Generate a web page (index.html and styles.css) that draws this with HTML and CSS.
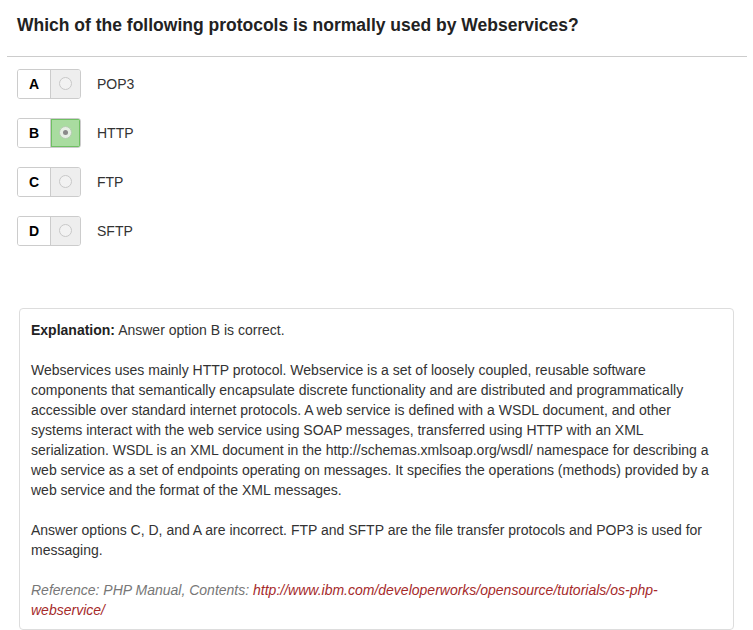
FILE: index.html
```html
<!DOCTYPE html>
<html>
<head>
<meta charset="utf-8">
<link rel="stylesheet" href="styles.css">
</head>
<body>
<div class="page">
  <h3 class="question">Which of the following protocols is normally used by Webservices?</h3>
  <hr class="rule">
  <div class="options">
    <div class="option">
      <div class="choice"><span class="letter">A</span><span class="radio-cell"><span class="radio"></span></span></div>
      <span class="label">POP3</span>
    </div>
    <div class="option">
      <div class="choice"><span class="letter">B</span><span class="radio-cell selected"><span class="radio checked"></span></span></div>
      <span class="label">HTTP</span>
    </div>
    <div class="option">
      <div class="choice"><span class="letter">C</span><span class="radio-cell"><span class="radio"></span></span></div>
      <span class="label">FTP</span>
    </div>
    <div class="option">
      <div class="choice"><span class="letter">D</span><span class="radio-cell"><span class="radio"></span></span></div>
      <span class="label">SFTP</span>
    </div>
  </div>
  <div class="explanation">
    <p><strong>Explanation:</strong> Answer option B is correct.</p>
    <p>Webservices uses mainly HTTP protocol. Webservice is a set of loosely coupled, reusable software components that semantically encapsulate discrete functionality and are distributed and programmatically accessible over standard internet protocols. A web service is defined with a WSDL document, and other systems interact with the web service using SOAP messages, transferred using HTTP with an XML serialization. WSDL is an XML document in the http://schemas.xmlsoap.org/wsdl/ namespace for describing a web service as a set of endpoints operating on messages. It specifies the operations (methods) provided by a web service and the format of the XML messages.</p>
    <p>Answer options C, D, and A are incorrect. FTP and SFTP are the file transfer protocols and POP3 is used for messaging.</p>
    <p class="reference">Reference: PHP Manual, Contents: <a href="#">http://www.ibm.com/developerworks/opensource/tutorials/os-php-webservice/</a></p>
  </div>
</div>
</body>
</html>
```
FILE: styles.css
```css
html, body {
  margin: 0;
  padding: 0;
  background: #fff;
}
body {
  font-family: "Liberation Sans", Arial, sans-serif;
  font-size: 14px;
  line-height: 20px;
  color: #333;
}
.page {
  padding: 0 6px;
}
.question {
  margin: 0;
  padding: 13px 11px 0;
  font-size: 17.5px;
  line-height: 24px;
  font-weight: bold;
  color: #222;
}
.rule {
  margin: 19px 0 0 1px;
  border: 0;
  border-top: 1px solid #ccc;
  height: 0;
}
.options {
  display: flex;
  flex-direction: column;
  gap: 19px;
  padding: 12px 0 0 11px;
}
.option {
  display: flex;
  align-items: center;
  gap: 16px;
}
.choice {
  display: flex;
  width: 64px;
  height: 30px;
  border: 1px solid #ccc;
  border-radius: 3px;
  box-sizing: border-box;
  overflow: hidden;
}
.letter {
  width: 32px;
  display: flex;
  align-items: center;
  justify-content: center;
  font-weight: bold;
  font-size: 14px;
  color: #000;
  background: #fff;
  border-right: 1px solid #ccc;
}
.radio-cell {
  flex: 1;
  display: flex;
  align-items: center;
  justify-content: center;
  background: #eee;
}
.radio-cell.selected {
  background: #a9dca0;
  box-shadow: inset 0 0 0 1px #6fbf63;
}
.radio {
  width: 13px;
  height: 13px;
  border-radius: 50%;
  border: 1px solid #c8c8c8;
  background: #f2f2f2;
  box-sizing: border-box;
  margin-top: -2px;
  display: flex;
  align-items: center;
  justify-content: center;
}
.radio.checked {
  background: #e6efe4;
  border-color: #b5ccb1;
}
.radio.checked::after {
  content: "";
  width: 5px;
  height: 5px;
  border-radius: 50%;
  background: #8a8a8a;
}
.label {
  font-size: 14px;
  color: #333;
}
.explanation {
  margin: 62px 13px 0 13px;
  border: 1px solid #ddd;
  border-radius: 4px;
  padding: 11px 11px 9px 11px;
}
.explanation p {
  margin: 0 0 20px;
}
.explanation p:last-child {
  margin-bottom: 0;
}
.explanation strong {
  color: #222;
}
.reference {
  font-style: italic;
  color: #777;
}
.reference a {
  color: #a52a2a;
  text-decoration: none;
}
```
